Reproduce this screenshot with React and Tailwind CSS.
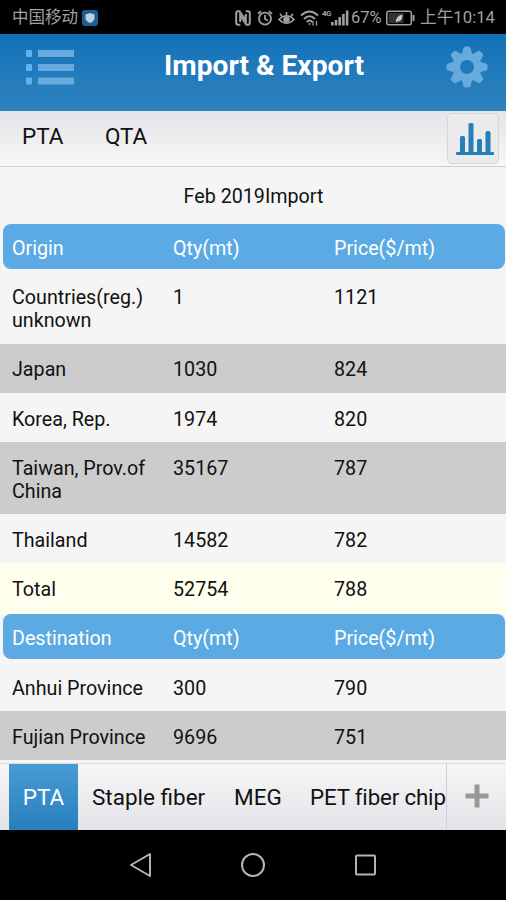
const origins = [
  { name: 'Countries(reg.) unknown', qty: '1', price: '1121', style: 'h-[72px] pt-[14px]' },
  { name: 'Japan', qty: '1030', price: '824', style: 'h-[49px] pt-[14px] bg-[#cccccc]' },
  { name: 'Korea, Rep.', qty: '1974', price: '820', style: 'h-[49px] pt-[15px]' },
  { name: 'Taiwan, Prov.of China', qty: '35167', price: '787', style: 'h-[72px] pt-[15px] bg-[#cccccc]' },
  { name: 'Thailand', qty: '14582', price: '782', style: 'h-[49px] pt-[15px]' },
  { name: 'Total', qty: '52754', price: '788', style: 'h-[51px] pt-[15px] bg-[#ffffee]' }
];

const destinations = [
  { name: 'Anhui Province', qty: '300', price: '790', style: 'h-[49px] pt-[15px]' },
  { name: 'Fujian Province', qty: '9696', price: '751', style: 'h-[49px] pt-[15px] bg-[#cccccc]' }
];

const teeth = [0, 45, 90, 135, 180, 225, 270, 315];

function StatusBar() {
  return (
    <div className="flex h-[34px] shrink-0 items-center bg-black pl-3 pr-[10px] pt-0.5 text-[#a0a0a0]">
      <span className="w-[67px] whitespace-nowrap text-[16.5px] leading-5">中国移动</span>
      <svg className="ml-[3px]" width="16" height="16" viewBox="0 0 16 16">
        <rect width="16" height="16" rx="3" fill="#1d5f91" />
        <path d="M8 3 L12.5 4.5 V8 Q12 11.5 8 13 Q4 11.5 3.5 8 V4.5 Z" fill="#c3d0da" />
      </svg>

      <div className="ml-auto flex items-center">
        <svg width="16" height="16" viewBox="0 0 16 16" fill="none" stroke="currentColor" strokeWidth="2">
          <path d="M5.3 14.8 H3 Q1.2 14.8 1.2 13 V3 Q1.2 1.2 3 1.2 H4.500 L10.8 10.5 V4" />
          <path d="M10.7 1.2 H13 Q14.8 1.2 14.8 3 V13 Q14.8 14.8 13 14.8 H11.500 L5.2 5.5 V12" />
        </svg>
        <svg className="ml-1.5" width="16" height="16" viewBox="0 0 16 16" fill="none" stroke="currentColor" strokeWidth="1.8">
          <circle cx="8" cy="8.7" r="6" />
          <path d="M8 5 V9 L11 10.5 M1 3.8 L4.2 1.2 M15 3.8 L11.8 1.2" />
        </svg>
        <svg className="ml-[5px]" width="17" height="16" viewBox="0 0 17 16" fill="none" stroke="currentColor" strokeWidth="1.6">
          <path d="M1 9.5 Q8.5 2 16 9.5 Q8.5 17 1 9.5 Z M8.5 5.5 V2 M4 6.5 L2 3.8 M13 6.5 L15 3.8" />
          <circle cx="8.5" cy="9.5" r="2.5" fill="currentColor" />
        </svg>
        <svg className="ml-[5px]" width="19" height="16" viewBox="0 0 19 16" fill="none" stroke="currentColor" strokeWidth="2">
          <path d="M1 5.5 Q9.5 -2.5 18 5.5 M4 9 Q9.5 3.5 15 9 M6.7 12 Q9.5 9 12.3 12" />
          <circle cx="9.5" cy="14" r="1" fill="currentColor" stroke="none" />
          <path d="M13 15.5 V11 M16.5 11 V15.5" strokeWidth="1.3" />
        </svg>
        <span className="ml-[3px] mt-px w-[9px] self-start text-[8px] font-bold leading-[9px] tracking-[-0.5px]">4G</span>
        <svg width="18" height="16" viewBox="0 0 18 16" fill="currentColor">
          <path d="M0 12 h2.6 v3.5 h-2.6 Z M3.7 10 h2.6 v5.5 h-2.6 Z M7.4 7 h2.6 v8.5 h-2.6 Z M11.1 4 h2.6 v11.5 h-2.6 Z M14.8 0.5 h2.6 v15 h-2.6 Z" />
        </svg>
        <span className="ml-0.5 w-[33px] text-[16.5px] leading-5">67%</span>
        <svg className="ml-0.5" width="29" height="16" viewBox="0 0 29 16">
          <rect x="0.8" y="1.3" width="24.5" height="13.4" rx="2" fill="none" stroke="currentColor" strokeWidth="1.5" />
          <rect x="2.5" y="3" width="15" height="10" fill="#333333" />
          <rect x="26.5" y="5" width="2" height="6" fill="currentColor" />
          <path d="M10 12.5 Q9.5 6 16.5 4.5 Q16.5 11.5 11.5 11.5 Z" fill="#c8c8c8" />
        </svg>
        <span className="ml-[5px] w-[76px] whitespace-nowrap text-[16.7px] leading-5">上午10:14</span>
      </div>
    </div>
  );
}

function Header() {
  return (
    <div className="flex h-[77px] shrink-0 items-start justify-between bg-linear-to-b from-[#1071b9] to-[#2e83bd] pl-[25px] pr-[18px]">
      <svg className="mt-[15px]" width="50" height="36" viewBox="0 0 50 36">
        <g fill="#5db5ee">
          <rect x="1" y="1" width="6" height="7" rx="1" />
          <rect x="1" y="15" width="6" height="7" rx="1" />
          <rect x="1" y="28.5" width="6" height="7" rx="1" />
        </g>
        <g fill="#66aade">
          <rect x="13" y="1" width="36" height="7" />
          <rect x="13" y="15" width="36" height="7" />
          <rect x="13" y="28.5" width="36" height="7" />
        </g>
      </svg>
      <h1 className="ml-[7px] mt-4 text-[28.2px] font-bold leading-8 text-white">Import &amp; Export</h1>
      <svg className="mt-3" width="42" height="42" viewBox="-21 -21 42 42" fill="#66aade">
        <circle r="10.8" fill="none" stroke="#66aade" strokeWidth="7.6" />
        {teeth.map((angle) => (
          <path key={angle} d="M-5.5 -12 L-3.5 -19 Q-3 -20.5 -1.5 -20.5 H1.5 Q3 -20.5 3.5 -19 L5.5 -12 Z" transform={`rotate(${angle})`} />
        ))}
      </svg>
    </div>
  );
}

function TableHead({ label }) {
  return (
    <div className="ml-[3px] mr-px grid h-[45px] grid-cols-[161px_161px_1fr] items-center rounded-[8px] bg-[#5baae3] pl-[9px] pt-[3px] text-white">
      <span>{label}</span>
      <span>Qty(mt)</span>
      <span>Price($/mt)</span>
    </div>
  );
}

function Row({ row }) {
  return (
    <div className={`grid grid-cols-[161px_161px_1fr] items-start pl-3 ${row.style}`}>
      <span className="pr-3">{row.name}</span>
      <span>{row.qty}</span>
      <span>{row.price}</span>
    </div>
  );
}

export default function App() {
  return (
    <div className="flex h-[900px] w-[506px] flex-col overflow-hidden bg-[#f5f5f5] font-['Roboto','Noto_Sans_CJK_SC',sans-serif] text-[#111111]">
      <StatusBar />
      <Header />

      <div className="flex h-14 shrink-0 items-start border-b border-[#cfcfd3] bg-linear-to-b from-[#e4e4e9] to-[#f7f7f7] pl-[22px] pr-[7px] text-[22.5px] leading-[50px]">
        <span className="w-[83px]">PTA</span>
        <span>QTA</span>
        <button className="ml-auto mt-0.5 flex h-[51px] w-[52px] items-center justify-center rounded-[5px] border border-[#d5d5da] bg-[#ebebed] pl-[3px]">
          <svg width="38" height="34" viewBox="0 0 38 34" fill="#2580b9">
            <rect x="0" y="30" width="38" height="3" rx="1" />
            <rect x="4" y="14" width="5" height="17" rx="1.5" />
            <rect x="12.5" y="1" width="5" height="30" rx="1.5" />
            <rect x="21" y="17" width="5" height="14" rx="1.5" />
            <rect x="29.5" y="9" width="5" height="22" rx="1.5" />
          </svg>
        </button>
      </div>

      <div className="h-[596px] shrink-0 text-[19.7px] leading-[23px]">
        <p className="h-[57px] pl-px pt-[18px] text-center">Feb 2019Import</p>
        <TableHead label="Origin" />
        <div className="pt-[3px]">
          {origins.map((row) => (
            <Row key={row.name} row={row} />
          ))}
        </div>
        <TableHead label="Destination" />
        <div className="pt-[3px]">
          {destinations.map((row) => (
            <Row key={row.name} row={row} />
          ))}
        </div>
      </div>

      <div className="flex h-[67px] shrink-0 border-t border-[#dedee2] bg-linear-to-b from-[#f7f7f7] to-[#e3e3e8] text-[22.5px] leading-[67px]">
        <div className="flex w-[446px] overflow-hidden whitespace-nowrap pl-[9px]">
          <span className="w-[69px] shrink-0 bg-linear-to-b from-[#489bd4] to-[#2580bd] text-center text-white">PTA</span>
          <span className="ml-[14px] w-[142px] shrink-0">Staple fiber</span>
          <span className="w-[76px] shrink-0">MEG</span>
          <span className="shrink-0 text-[22.3px] tracking-[-0.15px]">PET fiber chip</span>
        </div>
        <button className="flex flex-1 items-center justify-center border-l border-[#cfcfd4]">
          <svg className="-mt-0.5" width="24" height="24" viewBox="0 0 24 24" fill="#989898">
            <path d="M9.5 0.5 h5 v9 h9 v5 h-9 v9 h-5 v-9 h-9 v-5 h9 Z" />
          </svg>
        </button>
      </div>

      <div className="flex flex-1 items-center justify-center gap-[87px] bg-black text-[#b4b4b4]">
        <svg width="24" height="26" viewBox="0 0 24 26" fill="none" stroke="currentColor" strokeWidth="2" strokeLinejoin="round">
          <path d="M2 13 L21 2 V24 Z" />
        </svg>
        <svg width="26" height="26" viewBox="0 0 26 26" fill="none" stroke="currentColor" strokeWidth="2">
          <circle cx="13" cy="13" r="11" />
        </svg>
        <svg width="24" height="26" viewBox="0 0 24 26" fill="none" stroke="currentColor" strokeWidth="2">
          <rect x="3" y="3.5" width="19" height="19" rx="1" />
        </svg>
      </div>
    </div>
  );
}
